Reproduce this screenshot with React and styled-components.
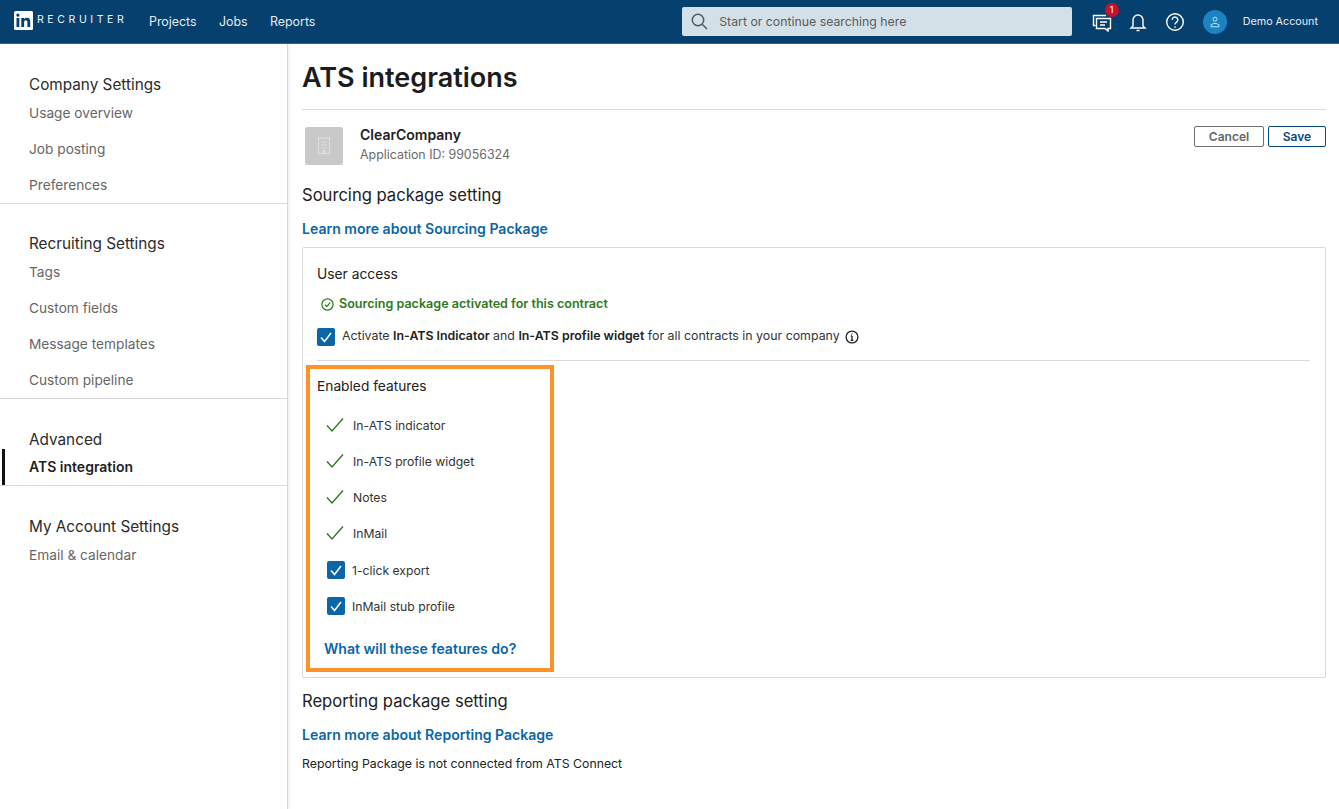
import React from "react";
import styled, { createGlobalStyle } from "styled-components";

const GlobalStyle = createGlobalStyle`
  html, body {
    margin: 0;
    padding: 0;
    background: #fff;
    font-family: Inter, "Liberation Sans", sans-serif;
    color: #1f1f1f;
  }
  * { box-sizing: border-box; }
`;

const Page = styled.div`
  width: 1339px;
  height: 809px;
  overflow: hidden;
  display: flex;
  flex-direction: column;
`;

const Header = styled.header`
  height: 44px;
  flex: none;
  background: #05406f;
  border-bottom: 1px solid #2f6a94;
  display: flex;
  align-items: center;
  padding: 0 21px 0 14px;
  color: #e6edf2;
`;
const Logo = styled.div`
  display: flex;
  align-items: flex-start;
  width: 135px;
  height: 20px;
  margin-top: -1px;
`;
const LogoMark = styled.svg`
  width: 19px;
  height: 19px;
  flex: none;
`;
const LogoText = styled.span`
  font-size: 10.5px;
  letter-spacing: 3.6px;
  color: #f2f5f8;
  margin: 2px 0 0 4px;
  line-height: 14px;
`;
const NavLinks = styled.nav`
  display: flex;
  gap: 22.4px;
  font-size: 12.4px;
  color: #e3ebf1;
`;
const Search = styled.div`
  margin-left: auto;
  width: 390px;
  height: 29px;
  background: #d3e0e8;
  border-radius: 2px;
  display: flex;
  align-items: center;
  padding-left: 8px;
  gap: 10.5px;
  color: #5c5c5c;
  font-size: 12.3px;
`;
const HeaderIcons = styled.div`
  display: flex;
  align-items: center;
  margin-left: 18px;
`;
const IconSlot = styled.div`
  position: relative;
  width: 24px;
  height: 24px;
  margin-right: ${(p) => p.$gap}px;
  display: flex;
  align-items: center;
  justify-content: center;
`;
const Badge = styled.span`
  position: absolute;
  top: -7px;
  right: -5px;
  width: 14px;
  height: 14px;
  border-radius: 50%;
  background: #c4122f;
  color: #fff;
  font-size: 9px;
  line-height: 14px;
  text-align: center;
`;
const Avatar = styled.div`
  width: 24px;
  height: 24px;
  border-radius: 50%;
  background: #1a84c2;
  display: flex;
  align-items: center;
  justify-content: center;
`;
const AccountName = styled.span`
  font-size: 10.75px;
  margin-left: 16px;
  color: #e6edf2;
`;

const Body = styled.div`
  flex: 1;
  display: flex;
  min-height: 0;
`;

const Sidebar = styled.aside`
  width: 288px;
  flex: none;
  border-right: 1px solid #d6d6d6;
  box-shadow: 1px 0 3px rgba(0, 0, 0, 0.08);
  padding-top: 29px;
`;
const SideSection = styled.div`
  margin-bottom: ${(p) => p.$after}px;
  border-bottom: ${(p) => (p.$last ? "none" : "1px solid #d9d9d9")};
`;
const SideTitle = styled.div`
  font-size: 15.3px;
  height: 22px;
  line-height: 22px;
  padding: 1px 0 0 29px;
  color: #2b2b2b;
`;
const SideItem = styled.div`
  font-size: 13.7px;
  line-height: 18px;
  height: 36px;
  padding: 9px 0 9px 29px;
  color: #666;
`;
const ActiveItem = styled.div`
  font-size: 14px;
  font-weight: 600;
  line-height: 18px;
  height: 36px;
  margin: -1px 0 0 2px;
  padding: 9px 0 9px 24px;
  border-left: 3px solid #111;
  color: #1f1f1f;
`;

const Main = styled.main`
  flex: 1;
  padding: 0 13px 0 14px;
  min-width: 0;
`;
const Title = styled.h1`
  margin: 0;
  height: 66px;
  border-bottom: 1px solid #d9d9d9;
  font-size: 27px;
  font-weight: 600;
  line-height: 67px;
  color: #1c1c1c;
`;
const AppRow = styled.div`
  display: flex;
  align-items: flex-start;
  margin-top: 16px;
  padding-left: 3px;
`;
const AppLogo = styled.div`
  width: 38px;
  height: 38px;
  border-radius: 2px;
  background: #c9c9c9;
  display: flex;
  align-items: center;
  justify-content: center;
  margin-top: 1px;
`;
const AppInfo = styled.div`
  margin-left: 17px;
`;
const AppName = styled.div`
  font-size: 14px;
  font-weight: 600;
  line-height: 20px;
  margin-top: -1px;
  color: #222;
`;
const AppId = styled.div`
  font-size: 12.4px;
  line-height: 18px;
  margin-top: 1px;
  color: #6b6b6b;
`;
const Buttons = styled.div`
  margin-left: auto;
  display: flex;
  gap: 4px;
`;
const Button = styled.button`
  height: 21px;
  width: ${(p) => p.$width}px;
  padding: 0;
  background: #fff;
  border: 1px solid ${(p) => (p.$primary ? "#0a4a7c" : "#6f6f6f")};
  border-radius: 2px;
  font: 600 12px Inter, sans-serif;
  color: ${(p) => (p.$primary ? "#0a4a7c" : "#666")};
`;
const SectionTitle = styled.h2`
  margin: ${(p) => p.$top}px 0 0;
  font-size: 16.6px;
  font-weight: 400;
  line-height: 22px;
  color: #222;
`;
const LinkText = styled.a`
  display: block;
  margin-top: ${(p) => p.$top}px;
  font-size: 14.05px;
  font-weight: 600;
  line-height: 20px;
  color: #0a66a8;
`;
const Card = styled.section`
  margin-top: 8px;
  height: 431px;
  border: 1px solid #d9d9d9;
  border-radius: 2px;
  padding: 16px 15px 0 14px;
`;
const CardLabel = styled.div`
  font-size: 13.8px;
  line-height: 20px;
  color: #222;
`;
const StatusRow = styled.div`
  display: flex;
  align-items: center;
  gap: 5px;
  margin: 10px 0 0 4px;
  font-size: 12.55px;
  font-weight: 600;
  line-height: 20px;
  color: #2f7a22;
`;
const ActivateRow = styled.div`
  display: flex;
  align-items: center;
  gap: 6px;
  height: 20px;
  margin-top: 13px;
  font-size: 12.37px;
  line-height: 20px;
  color: #333;
  b { font-weight: 600; color: #222; }
`;
const ActivateText = styled.span`
  margin: -2px -1px 0 1px;
`;
const Check = styled.span`
  width: 18px;
  height: 18px;
  flex: none;
  border-radius: 2px;
  background: #0a66a8;
  display: flex;
  align-items: center;
  justify-content: center;
`;
const CardRule = styled.div`
  height: 1px;
  background: #d9d9d9;
  margin-top: 13px;
`;
const FeatureBox = styled.div`
  width: 248px;
  height: 307px;
  margin: 4px 0 0 -11px;
  border: 4px solid #ff9229;
  padding: 7px 0 0 7px;
`;
const FeatureTitle = styled.div`
  font-size: 13.75px;
  line-height: 20px;
  color: #222;
  margin-bottom: 11px;
`;
const FeatureRow = styled.div`
  display: flex;
  align-items: center;
  height: 36px;
  padding-left: ${(p) => (p.$box ? 10 : 9)}px;
  gap: ${(p) => (p.$box ? 7 : 9)}px;
  font-size: 12.2px;
  color: #333;
`;
const BoxGroup = styled.div`
  margin-top: 1px;
`;
const BoxLink = styled(LinkText)`
  margin: 15px 0 0 7px;
`;
const Note = styled.div`
  margin-top: 9px;
  font-size: 12.3px;
  line-height: 20px;
  color: #222;
`;

const GreenTick = () => (
  <svg width="18" height="16" viewBox="0 0 18 16" fill="none">
    <path d="M1 8.5 L6 14 L17 1.5" stroke="#2f7a22" strokeWidth="1.4" />
  </svg>
);
const WhiteTick = () => (
  <svg width="12" height="11" viewBox="0 0 12 11" fill="none">
    <path d="M1 5.5 L4.5 9.5 L11 1" stroke="#fff" strokeWidth="1.5" />
  </svg>
);

const App = () => {
  return (
    <Page>
      <GlobalStyle />
      <Header>
        <Logo>
          <LogoMark viewBox="0 0 19 19">
            <rect width="19" height="19" rx="1.5" fill="#fff" />
            <rect x="2.5" y="7" width="2.8" height="9" fill="#05406f" />
            <circle cx="3.9" cy="4.1" r="1.6" fill="#05406f" />
            <path d="M7.3 7h2.7v1.3c.5-.9 1.5-1.5 2.8-1.5 2.6 0 3.4 1.6 3.4 4V16h-2.8v-4.6c0-1.2-.3-2.2-1.5-2.2-1.3 0-1.8.9-1.8 2.2V16H7.3z" fill="#05406f" />
          </LogoMark>
          <LogoText>RECRUITER</LogoText>
        </Logo>
        <NavLinks>
          <span>Projects</span>
          <span>Jobs</span>
          <span>Reports</span>
        </NavLinks>
        <Search>
          <svg width="19" height="19" viewBox="0 0 19 19" fill="none" stroke="#4d5a63" strokeWidth="1.5">
            <circle cx="8" cy="8" r="5.7" />
            <path d="M12.2 12.2 L17 17" />
          </svg>
          <span>Start or continue searching here</span>
        </Search>
        <HeaderIcons>
          <IconSlot $gap={12}>
            <svg width="20" height="20" viewBox="0 0 20 20" fill="none" stroke="#fff" strokeWidth="1.4">
              <path d="M3.5 13.5H1.5V3.5H14" />
              <path d="M4.5 6.5H18.5V16.5H16V19L13 16.5H4.5Z" />
              <path d="M8 10H15M8 13H13" />
            </svg>
            <Badge>1</Badge>
          </IconSlot>
          <IconSlot $gap={13}>
            <svg width="18" height="20" viewBox="0 0 18 20" fill="none" stroke="#fff" strokeWidth="1.4">
              <path d="M4 14V8a5 5 0 0 1 10 0v6l2 2H2Z" />
              <path d="M7.5 18.5h3" />
            </svg>
          </IconSlot>
          <IconSlot $gap={16}>
            <svg width="20" height="20" viewBox="0 0 20 20" fill="none" stroke="#fff" strokeWidth="1.4">
              <circle cx="10" cy="10" r="8.3" />
              <path d="M7.2 7.8a2.8 2.8 0 1 1 4.4 2.3c-1 .7-1.6 1.2-1.6 2.5" />
              <path d="M10 14.2v1.6" />
            </svg>
          </IconSlot>
          <Avatar>
            <svg width="10" height="12" viewBox="0 0 10 12" fill="none" stroke="#bfe0f4" strokeWidth="1">
              <circle cx="5" cy="3.2" r="2" />
              <path d="M1 10.8V8.8l2.5-1.3h3L9 8.8v2z" />
            </svg>
          </Avatar>
          <AccountName>Demo Account</AccountName>
        </HeaderIcons>
      </Header>
      <Body>
        <Sidebar>
          <SideSection $after={28}>
            <SideTitle>Company Settings</SideTitle>
            <SideItem>Usage overview</SideItem>
            <SideItem>Job posting</SideItem>
            <SideItem>Preferences</SideItem>
          </SideSection>
          <SideSection $after={29}>
            <SideTitle>Recruiting Settings</SideTitle>
            <SideItem>Tags</SideItem>
            <SideItem>Custom fields</SideItem>
            <SideItem>Message templates</SideItem>
            <SideItem>Custom pipeline</SideItem>
          </SideSection>
          <SideSection $after={29}>
            <SideTitle>Advanced</SideTitle>
            <ActiveItem>ATS integration</ActiveItem>
          </SideSection>
          <SideSection $last $after={0}>
            <SideTitle>My Account Settings</SideTitle>
            <SideItem>Email &amp; calendar</SideItem>
          </SideSection>
        </Sidebar>
        <Main>
          <Title>ATS integrations</Title>
          <AppRow>
            <AppLogo>
              <svg width="14" height="18" viewBox="0 0 14 18" fill="none" stroke="#dedede" strokeWidth="1.2">
                <rect x="1.5" y="1" width="11" height="15.5" />
                <path d="M4 5h6M4 8h6M4 11h6M6 16.5v-3h2v3" />
              </svg>
            </AppLogo>
            <AppInfo>
              <AppName>ClearCompany</AppName>
              <AppId>Application ID: 99056324</AppId>
            </AppInfo>
            <Buttons>
              <Button $width={70}>Cancel</Button>
              <Button $width={58} $primary>Save</Button>
            </Buttons>
          </AppRow>
          <SectionTitle $top={19}>Sourcing package setting</SectionTitle>
          <LinkText $top={13}>Learn more about Sourcing Package</LinkText>
          <Card>
            <CardLabel>User access</CardLabel>
            <StatusRow>
              <svg width="13" height="13" viewBox="0 0 13 13" fill="none" stroke="#2f7a22" strokeWidth="1.3">
                <circle cx="6.5" cy="6.5" r="5.6" />
                <path d="M3.8 6.6 L5.8 8.6 L9.2 4.6" />
              </svg>
              Sourcing package activated for this contract
            </StatusRow>
            <ActivateRow>
              <Check><WhiteTick /></Check>
              <ActivateText>
                Activate <b>In-ATS Indicator</b> and <b>In-ATS profile widget</b> for all contracts in your company
              </ActivateText>
              <svg width="14" height="14" viewBox="0 0 14 14" fill="none" stroke="#222" strokeWidth="1.3">
                <circle cx="7" cy="7" r="5.9" />
                <path d="M7 6v4.4M5.6 10.4h2.8M5.8 6H7" />
                <path d="M7 3.4v1.2" />
              </svg>
            </ActivateRow>
            <CardRule />
            <FeatureBox>
              <FeatureTitle>Enabled features</FeatureTitle>
              <FeatureRow><GreenTick />In-ATS indicator</FeatureRow>
              <FeatureRow><GreenTick />In-ATS profile widget</FeatureRow>
              <FeatureRow><GreenTick />Notes</FeatureRow>
              <FeatureRow><GreenTick />InMail</FeatureRow>
              <BoxGroup>
                <FeatureRow $box><Check><WhiteTick /></Check>1-click export</FeatureRow>
                <FeatureRow $box><Check><WhiteTick /></Check>InMail stub profile</FeatureRow>
              </BoxGroup>
              <BoxLink>What will these features do?</BoxLink>
            </FeatureBox>
          </Card>
          <SectionTitle $top={12}>Reporting package setting</SectionTitle>
          <LinkText $top={13}>Learn more about Reporting Package</LinkText>
          <Note>Reporting Package is not connected from ATS Connect</Note>
        </Main>
      </Body>
    </Page>
  );
};

export default App;
